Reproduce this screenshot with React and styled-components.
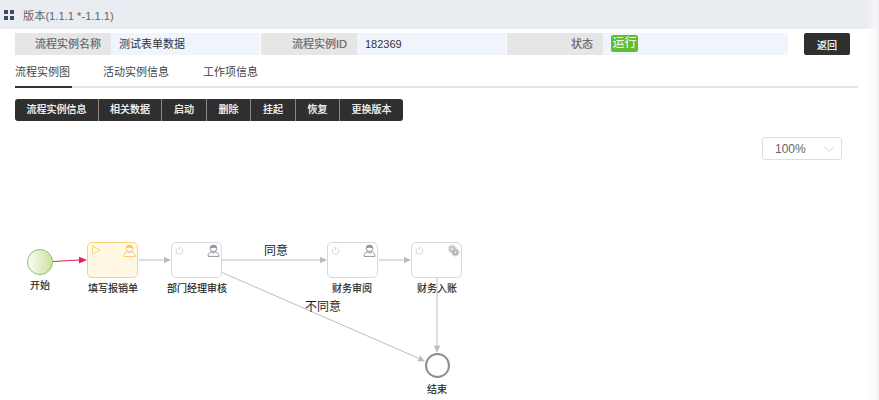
import React from 'react';
import styled, { createGlobalStyle } from 'styled-components';

const Global = createGlobalStyle`
  html, body { margin: 0; padding: 0; background: #fff; height: 100%; overflow: hidden; }
  body { font-family: "Liberation Sans", "Noto Sans CJK SC", sans-serif; font-size: 11px; color: #333; }
`;

const Page = styled.div`
  position: relative; width: 879px; height: 400px; overflow: hidden; background: #fff;
  display: flex; flex-direction: column;
  &::after {
    content: ""; position: absolute; top: 0; right: 0; bottom: 0; width: 12px; pointer-events: none;
    background: linear-gradient(90deg, rgba(245,245,245,0), #f8f8f8 83%, #f1f1f1 84%);
  }
`;
const TitleBar = styled.header`
  flex: none; height: 29px; width: 877px; background: #e9ecf1; display: flex; align-items: center;
  padding-left: 4px; gap: 9px; box-sizing: border-box; color: #666; font-size: 11.2px;
`;
const Grid4 = styled.svg`width: 10px; height: 10px; fill: #3b4a5e; display: block;`;
const Content = styled.div`flex: none; padding: 4px 0 0 15px; width: 858px; height: 92px; box-sizing: border-box;`;
const InfoRow = styled.div`display: flex; align-items: stretch; height: 22px;`;
const InfoLabel = styled.div`
  flex: none; width: 96px; background: #e6e6e6; color: #666; text-align: right;
  padding-right: 10px; box-sizing: border-box; line-height: 22px; -webkit-text-stroke: 0.2px #666;
`;
const InfoValue = styled.div`
  flex: none; width: ${p => p.$w}px; background: #f0f4fc; color: #333; padding-left: 8px; box-sizing: border-box;
  line-height: 22px; margin-right: ${p => p.$gap}px; display: flex; align-items: center;
`;
const Badge = styled.span`
  background: #63bd33; color: #fff; border-radius: 2px; width: 27px; height: 17px; line-height: 17px;
  text-align: center; font-size: 12px; display: block; margin-top: -1px;
`;
const BackButton = styled.button`
  flex: none; width: 46px; height: 22px; margin-left: 16px; border: 0; border-radius: 2px; background: #2f2f2f;
  color: #fff; font: inherit; font-size: 10px; padding: 0; -webkit-text-stroke: 0.2px #fff;
`;
const Tabs = styled.nav`
  display: flex; gap: 31px; margin-top: 8px; height: 23px; width: 843px; border-bottom: 2px solid #e0e4ef;
`;
const Tab = styled.div`
  flex: none; line-height: 18px; height: 23px; color: #444; min-width: ${p => p.$w}px;
  border-bottom: 2px solid ${p => (p.$active ? '#333' : 'transparent')};
`;
const Toolbar = styled.div`
  display: inline-flex; margin-top: 11px; height: 22px; background: #2f2f2f; border-radius: 3px;
  overflow: hidden; vertical-align: top;
`;
const ToolButton = styled.div`
  color: #fff; line-height: 22px; text-align: center; font-size: 10px; width: ${p => p.$w}px;
  box-sizing: border-box; border-right: 1px solid #8a8a8a; -webkit-text-stroke: 0.2px #fff;
  &:last-child { border-right: 0; }
`;
const Canvas = styled.section`
  position: relative; flex: 1; overflow: hidden; display: flex; justify-content: flex-end;
  align-items: flex-start; padding: 16px 37px 0 0;
`;
const ZoomSelect = styled.div`
  width: 80px; height: 23px; box-sizing: border-box; display: flex; align-items: center;
  justify-content: space-between; border: 1px solid #dcdfe6; border-radius: 3px; color: #666;
  font-size: 12px; padding: 0 6px 0 12px; background: #fff;
`;
const Caret = styled.svg`width: 12px; height: 8px; fill: none; stroke: #d0d3da; stroke-width: 1;`;
const Edges = styled.svg`position: absolute; left: 0; top: 0; width: 879px; height: 279px;`;
const StartEvent = styled.div`
  position: absolute; left: 27px; top: 128px; width: 26px; height: 26px; box-sizing: border-box;
  border-radius: 50%; border: 1px solid #8fc06a; background: linear-gradient(90deg, #fafcf5, #cfe19c);
`;
const EndEvent = styled.div`
  position: absolute; left: 425px; top: 232px; width: 25px; height: 25px; box-sizing: border-box;
  border-radius: 50%; border: 2px solid #8a8f96; background: #fff;
`;
const Task = styled.div`
  position: absolute; left: ${p => p.$x}px; top: 121px; width: 51px; height: 36px; box-sizing: border-box;
  border-radius: 5px; border: 1px solid ${p => (p.$active ? '#fbd27a' : '#d9d9d9')};
  background: ${p => (p.$active ? '#fff9e3' : '#fff')};
  display: flex; justify-content: space-between; align-items: flex-start; padding: 1px 1px 0 3px;
`;
const TaskIcon = styled.svg`display: block; flex: none; width: ${p => p.$s}px; height: ${p => p.$s}px; margin-top: ${p => p.$mt || 0}px;`;
const NodeLabel = styled.div`
  position: absolute; left: ${p => p.$x}px; top: ${p => p.$y}px; transform: translateX(-50%);
  white-space: nowrap; font-size: ${p => p.$size || 10}px; color: #222; line-height: 14px;
  -webkit-text-stroke: ${p => (p.$size ? 0 : 0.15)}px #222;
`;

const Person = ({ color }) => (
  <TaskIcon $s={13} viewBox="0 0 13 13" fill="none">
    <path d="M1 12.4c0-2.8 1.2-3.8 3.4-4.6h4.2c2.2.8 3.4 1.8 3.4 4.6z" fill="#fff" stroke={color} strokeWidth="1" />
    <circle cx="6.5" cy="4.4" r="3.3" fill="#fff" stroke={color} strokeWidth="1" />
    <path d="M3.2 4.4a3.3 3.3 0 0 1 6.6 0c-1.6-.8-4.8-.8-6.6 0z" fill={color} />
    <path d="M4.4 7.4h4.2v1.6l-2.1 1.2-2.1-1.2z" fill={color} opacity=".45" />
  </TaskIcon>
);
const Power = () => (
  <TaskIcon $s={9} $mt={2} viewBox="0 0 10 10" fill="none" stroke="#d4d4d4" strokeWidth="1">
    <path d="M3 2.2a3.8 3.8 0 1 0 4 0" /><path d="M5 .6v4" />
  </TaskIcon>
);
const Play = () => (
  <TaskIcon $s={10} $mt={1} viewBox="0 0 10 10" fill="none" stroke="#fbd27a" strokeWidth="1">
    <path d="M1.5 1v8L9 5z" />
  </TaskIcon>
);
const Gears = () => (
  <TaskIcon $s={13} viewBox="0 0 13 13" fill="#c6c6c6">
    <circle cx="5.2" cy="5" r="3.4" />
    <circle cx="5.2" cy="5" r="4" fill="none" stroke="#c6c6c6" strokeWidth="1" strokeDasharray="1.2 1" />
    <circle cx="8.4" cy="8.4" r="3" fill="#b4b4b4" />
    <circle cx="8.4" cy="8.4" r="3.6" fill="none" stroke="#b4b4b4" strokeWidth="1" strokeDasharray="1.2 1" />
    <circle cx="5.2" cy="5" r="1.2" fill="#e8e8e8" />
    <circle cx="8.4" cy="8.4" r="1.1" fill="#e8e8e8" />
  </TaskIcon>
);

const tools = [['流程实例信息', 84], ['相关数据', 63], ['启动', 45], ['删除', 44], ['挂起', 45], ['恢复', 44], ['更换版本', 63]];

export default function App() {
  return (
    <Page>
      <Global />
      <TitleBar>
        <Grid4 viewBox="0 0 10 10"><rect width="4" height="4" /><rect x="6" width="4" height="4" /><rect y="6" width="4" height="4" /><rect x="6" y="6" width="4" height="4" /></Grid4>
        版本(1.1.1 *-1.1.1)
      </TitleBar>
      <Content>
        <InfoRow>
          <InfoLabel>流程实例名称</InfoLabel>
          <InfoValue $w={149} $gap={1}>测试表单数据</InfoValue>
          <InfoLabel>流程实例ID</InfoLabel>
          <InfoValue $w={149} $gap={1}>182369</InfoValue>
          <InfoLabel>状态</InfoLabel>
          <InfoValue $w={185} $gap={0}><Badge>运行</Badge></InfoValue>
          <BackButton>返回</BackButton>
        </InfoRow>
        <Tabs>
          <Tab $active $w={57}>流程实例图</Tab>
          <Tab $w={69}>活动实例信息</Tab>
          <Tab $w={57}>工作项信息</Tab>
        </Tabs>
        <Toolbar>
          {tools.map(([t, w]) => <ToolButton key={t} $w={w}>{t}</ToolButton>)}
        </Toolbar>
      </Content>
      <Canvas>
        <ZoomSelect>
          100%
          <Caret viewBox="0 0 12 8"><path d="M1 1.5l5 5 5-5" /></Caret>
        </ZoomSelect>
        <Edges viewBox="0 0 879 279" fill="none">
          <path d="M53 140.5L80 139" stroke="#e0234f" strokeWidth="1" />
          <path d="M87 139l-8-3.2v6.6z" fill="#e0234f" />
          <g stroke="#bdbdbd" strokeWidth="1">
            <path d="M139 139h26" />
            <path d="M222 139h99" />
            <path d="M379 139h26" />
            <path d="M222 151.5L418 237" />
            <path d="M437 157V227" />
          </g>
          <g fill="#bdbdbd">
            <path d="M171 139l-7-3.2v6.4z" />
            <path d="M327 139l-7-3.2v6.4z" />
            <path d="M411 139l-7-3.2v6.4z" />
            <path d="M425 240.5l-7.6-.3 2.6-5.9z" />
            <path d="M437 232l-3.2-7.5h6.4z" />
          </g>
        </Edges>
        <StartEvent />
        <NodeLabel $x={40} $y={158}>开始</NodeLabel>
        <Task $x={87} $active><Play /><Person color="#fbc56a" /></Task>
        <NodeLabel $x={113} $y={161}>填写报销单</NodeLabel>
        <Task $x={171}><Power /><Person color="#8e97a3" /></Task>
        <NodeLabel $x={197} $y={161}>部门经理审核</NodeLabel>
        <Task $x={327}><Power /><Person color="#8e97a3" /></Task>
        <NodeLabel $x={352} $y={161}>财务审阅</NodeLabel>
        <Task $x={411}><Power /><Gears /></Task>
        <NodeLabel $x={437} $y={161}>财务入账</NodeLabel>
        <NodeLabel $x={276} $y={123} $size={12}>同意</NodeLabel>
        <NodeLabel $x={323} $y={179} $size={12}>不同意</NodeLabel>
        <EndEvent />
        <NodeLabel $x={437} $y={262}>结束</NodeLabel>
      </Canvas>
    </Page>
  );
}
